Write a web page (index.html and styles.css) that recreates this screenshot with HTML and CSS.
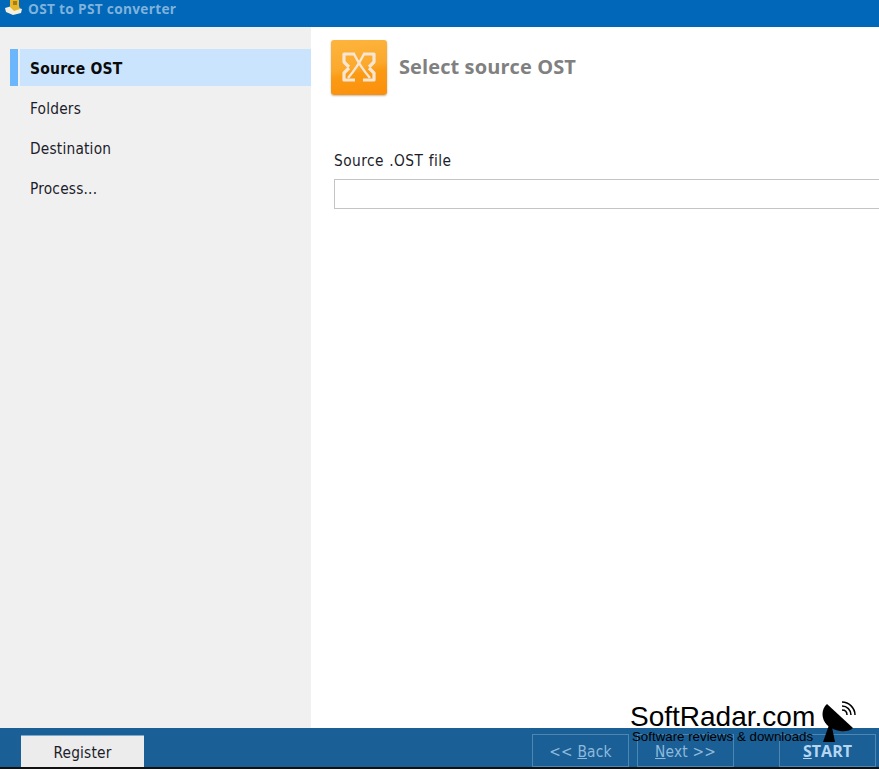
FILE: index.html
```html
<!DOCTYPE html>
<html lang="en">
<head>
<meta charset="utf-8">
<title>OST to PST converter</title>
<link rel="stylesheet" href="styles.css">
</head>
<body>
<div class="app">
  <header class="titlebar">
    <svg class="app-icon" width="18" height="17" viewBox="0 0 18 17">
      <path d="M0 9 L7 7 L17 10 L16 14 L8 16 L1 13 Z" fill="#f2eee0"/>
      <path d="M5 0 H14 V7 L15 10 L9 12 L5 8 Z" fill="#e6b62c"/>
      <path d="M8 2 H12 V6 H8 Z" fill="#a87c14"/>
    </svg>
    <span class="app-title">OST to PST converter</span>
  </header>
  <div class="content">
    <nav class="sidebar">
      <div class="step step-active">
        <span class="step-marker"></span>
        <span class="step-label">Source OST</span>
      </div>
      <div class="step"><span class="step-label">Folders</span></div>
      <div class="step"><span class="step-label">Destination</span></div>
      <div class="step"><span class="step-label">Process...</span></div>
    </nav>
    <main class="main">
      <div class="page-head">
        <div class="logo">
          <svg width="40" height="36" viewBox="0 0 40 36" fill="none" stroke="#f8e6d2" stroke-linejoin="round">
            <g stroke-width="2.400">
              <path d="M15 5 C19 13 25 22 31 29"/>
              <path d="M25 5 C21 13 15 22 9 29"/>
            </g>
            <g stroke-width="3.200">
              <path d="M16 5 H5 V13 L10 18"/>
              <path d="M24 5 H35 V13 L30 18"/>
              <path d="M16 31 H5 V24 L10 19"/>
              <path d="M24 31 H35 V24 L30 19"/>
            </g>
          </svg>
        </div>
        <h1 class="page-title">Select source OST</h1>
      </div>
      <label class="field-label" for="src">Source .OST file</label>
      <input class="field-input" id="src" type="text">
    </main>
  </div>
  <footer class="footer">
    <button class="btn-register" type="button">Register</button>
    <div class="nav-buttons">
      <button class="btn-ghost btn-back" type="button">&lt;&lt; <u>B</u>ack</button>
      <button class="btn-ghost btn-next" type="button"><u>N</u>ext &gt;&gt;</button>
      <button class="btn-ghost btn-start" type="button"><u>S</u>TART</button>
    </div>
  </footer>
</div>
<div class="watermark">
  <div class="wm-name">SoftRadar.com</div>
  <div class="wm-tag">Software reviews &amp; downloads</div>
  <svg class="wm-dish" width="36" height="42" viewBox="0 0 36 42">
    <path d="M6 3 C0 8 0 18 6 24 C12 30 26 33 32 27 Z" fill="#000"/>
    <path d="M8 24 L2 41 H14 L11 26 Z" fill="#000"/>
    <g fill="none" stroke="#000" stroke-width="1.5">
      <path d="M21 9 C24 9 26 11 26 14"/>
      <path d="M21 5 C26 5 30 9 30 14"/>
      <path d="M21 1 C28 1 34 7 34 14"/>
    </g>
  </svg>
</div>
</body>
</html>
```
FILE: styles.css
```css
* { box-sizing: border-box; }
html, body { margin: 0; padding: 0; height: 100%; overflow: hidden; background: #fff; }
body { font-family: "DejaVu Sans", sans-serif; color: #1a1a1a; position: relative; }
.app { display: flex; flex-direction: column; height: 769px; border-bottom: 2px solid #111; }
.titlebar { height: 27px; background: #0067b9; display: flex; align-items: flex-start; padding-left: 5px; gap: 5px; overflow: hidden; flex: none; }
.app-icon { margin-top: -1px; flex: none; }
.app-title { font: 700 13.700px/18px "Open Sans", sans-serif; color: #7fb3dc; letter-spacing: 0.3px; }
.content { flex: 1; display: flex; min-height: 0; }
.sidebar { width: 311px; background: #f0f0f0; padding-top: 22px; flex: none; }
.step { height: 37px; margin-bottom: 3px; display: flex; align-items: center; padding: 2px 0 0 30px; position: relative; font: 400 15.300px/20px "DejaVu Sans Condensed", "DejaVu Sans", sans-serif; font-stretch: condensed; letter-spacing: 0.2px; color: #1c1c2a; }
.step-active { margin-left: 20px; padding-left: 10px; background: #cbe4fd; font-weight: 700; font-size: 15.500px; color: #0a0a0a; }
.step-marker { position: absolute; left: -10px; top: 0; width: 8px; height: 37px; background: #6cb6fb; }
.main { flex: 1; background: #fff; padding: 13px 0 0 20px; min-width: 0; overflow: hidden; }
.page-head { display: flex; align-items: center; gap: 12px; height: 54px; }
.logo { width: 56px; height: 55px; border-radius: 3px; background: linear-gradient(170deg, #fdb53e 0%, #fba92c 48%, #fb9a14 60%, #fb8f0c 100%); box-shadow: 0 1px 2px #bbb; display: flex; align-items: center; justify-content: center; flex: none; }
.page-title { margin: 0; font: 700 20px/26px "Open Sans", sans-serif; color: #808080; letter-spacing: 0.1px; }
.field-label { display: block; margin: 57px 0 0 3px; font: 400 15.300px/20px "DejaVu Sans Condensed", "DejaVu Sans", sans-serif; font-stretch: condensed; letter-spacing: 0.45px; word-spacing: 0.5px; color: #1c1c2a; }
.field-input { display: block; margin: 8px 0 0 3px; width: 560px; height: 30px; border: 1px solid #c4c4c4; background: #fff; outline: none; }
.footer { height: 39px; background: #1a5f96; display: flex; align-items: flex-end; justify-content: space-between; padding: 0 3px 0 21px; flex: none; }
.btn-register { width: 123px; height: 32px; border: 0; border-top: 1px solid #7ea8c8; background: #ececec; font: 400 15.300px/20px "DejaVu Sans Condensed", "DejaVu Sans", sans-serif; font-stretch: condensed; letter-spacing: 0.2px; color: #1c1c2a; padding: 2px 0 0; }
.nav-buttons { display: flex; gap: 8px; align-items: flex-end; }
.btn-ghost { height: 33px; border: 1px solid #4d86b2; background: transparent; color: #8fbadb; font: 400 15.300px/20px "DejaVu Sans Condensed", "DejaVu Sans", sans-serif; font-stretch: condensed; letter-spacing: 0.2px; padding: 2px 0 0; }
.btn-back { width: 97px; }
.btn-next { width: 97px; margin-right: 37px; }
.btn-start { width: 97px; font: 700 16px/20px "Open Sans", sans-serif; letter-spacing: 0; color: #b4d6f2; padding: 0; }
.watermark { position: absolute; left: 630px; top: 700px; width: 240px; height: 50px; }
.wm-name { font: 400 28px/34px "Liberation Sans", sans-serif; color: #000; }
.wm-tag { font: 400 13.300px/14px "Liberation Sans", sans-serif; color: #000; position: absolute; left: 2px; top: 30px; white-space: nowrap; }
.wm-dish { position: absolute; left: 191px; top: 1px; }
```
